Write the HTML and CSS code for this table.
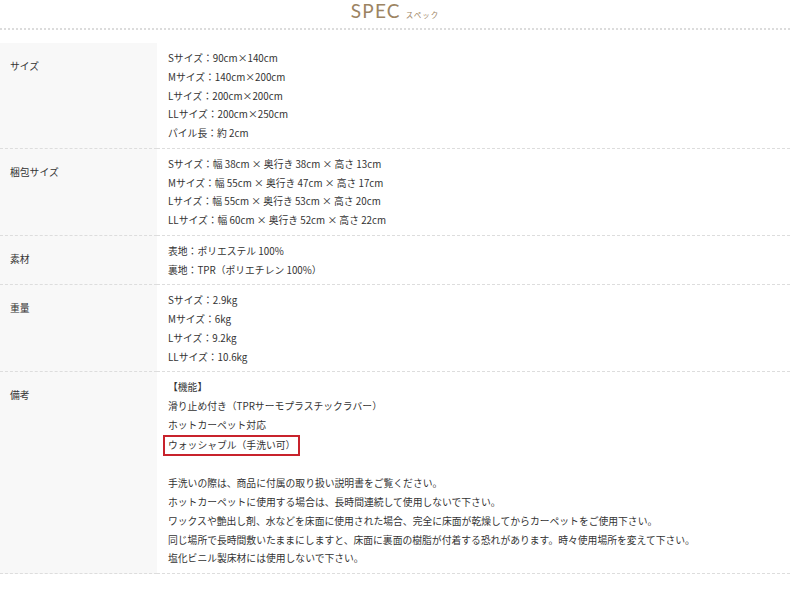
FILE: index.html
```html
<!DOCTYPE html>
<html lang="ja">
<head>
<meta charset="utf-8">
<link rel="stylesheet" href="styles.css">
</head>
<body>
<div class="page">
  <h2 class="title"><span class="title-en">SPEC</span><span class="title-ja">スペック</span></h2>
  <table class="spec">
    <tr>
      <th>サイズ</th>
      <td>
        <p>Sサイズ：90cm×140cm</p>
        <p>Mサイズ：140cm×200cm</p>
        <p>Lサイズ：200cm×200cm</p>
        <p>LLサイズ：200cm×250cm</p>
        <p>パイル長：約 2cm</p>
      </td>
    </tr>
    <tr>
      <th>梱包サイズ</th>
      <td>
        <p>Sサイズ：幅 38cm × 奥行き 38cm × 高さ 13cm</p>
        <p>Mサイズ：幅 55cm × 奥行き 47cm × 高さ 17cm</p>
        <p>Lサイズ：幅 55cm × 奥行き 53cm × 高さ 20cm</p>
        <p>LLサイズ：幅 60cm × 奥行き 52cm × 高さ 22cm</p>
      </td>
    </tr>
    <tr>
      <th>素材</th>
      <td>
        <p>表地：ポリエステル 100%</p>
        <p>裏地：TPR（ポリエチレン 100%）</p>
      </td>
    </tr>
    <tr>
      <th>重量</th>
      <td>
        <p>Sサイズ：2.9kg</p>
        <p>Mサイズ：6kg</p>
        <p>Lサイズ：9.2kg</p>
        <p>LLサイズ：10.6kg</p>
      </td>
    </tr>
    <tr>
      <th>備考</th>
      <td>
        <p>【機能】</p>
        <p>滑り止め付き（TPRサーモプラスチックラバー）</p>
        <p>ホットカーペット対応</p>
        <p><span class="mark">ウォッシャブル（手洗い可）</span></p>
        <p class="blank">&nbsp;</p>
        <p>手洗いの際は、商品に付属の取り扱い説明書をご覧ください。</p>
        <p>ホットカーペットに使用する場合は、長時間連続して使用しないで下さい。</p>
        <p>ワックスや艶出し剤、水などを床面に使用された場合、完全に床面が乾燥してからカーペットをご使用下さい。</p>
        <p>同じ場所で長時間敷いたままにしますと、床面に裏面の樹脂が付着する恐れがあります。時々使用場所を変えて下さい。</p>
        <p>塩化ビニル製床材には使用しないで下さい。</p>
      </td>
    </tr>
  </table>
</div>
</body>
</html>
```

FILE: styles.css
```css
html, body {
  margin: 0;
  padding: 0;
  background: #fff;
}
body {
  font-family: "Noto Sans CJK JP", "Noto Sans", sans-serif;
  color: #333;
}
.page {
  width: 790px;
}
.title {
  margin: 0;
  height: 28px;
  border-bottom: 2px dotted #dcdcdc;
  display: flex;
  justify-content: center;
  align-items: flex-end;
  font-weight: normal;
}
.title-en {
  font-family: "Lato", "Noto Sans", sans-serif;
  font-size: 19px;
  letter-spacing: 1.2px;
  color: #9c8462;
  line-height: 24px;
  padding-bottom: 5px;
}
.title-ja {
  font-size: 7.5px;
  color: #9c8462;
  margin-left: 5px;
  line-height: 10px;
  padding-bottom: 8px;
  letter-spacing: 1px;
}
.spec {
  margin-top: 13px;
  width: 790px;
  border-collapse: collapse;
  font-size: 9.8px;
  line-height: 18.75px;
}
.spec th {
  width: 157px;
  background: #f8f8f8;
  text-align: left;
  font-weight: normal;
  vertical-align: top;
  padding: 14px 0 0 10px;
  box-sizing: border-box;
  color: #333;
}
.spec td {
  vertical-align: top;
  padding: 6px 10px 5px 11px;
  color: #333;
}
.spec tr + tr th,
.spec tr + tr td {
  border-top: 1px dashed #ddd;
}
.spec tr:last-child th,
.spec tr:last-child td {
  border-bottom: 1px dashed #ddd;
}
.spec p {
  margin: 0;
}
.mark {
  display: inline-block;
  border: 2px solid #c8232c;
  padding: 0 3px;
  margin-left: -5px;
  line-height: 17px;
}
```
